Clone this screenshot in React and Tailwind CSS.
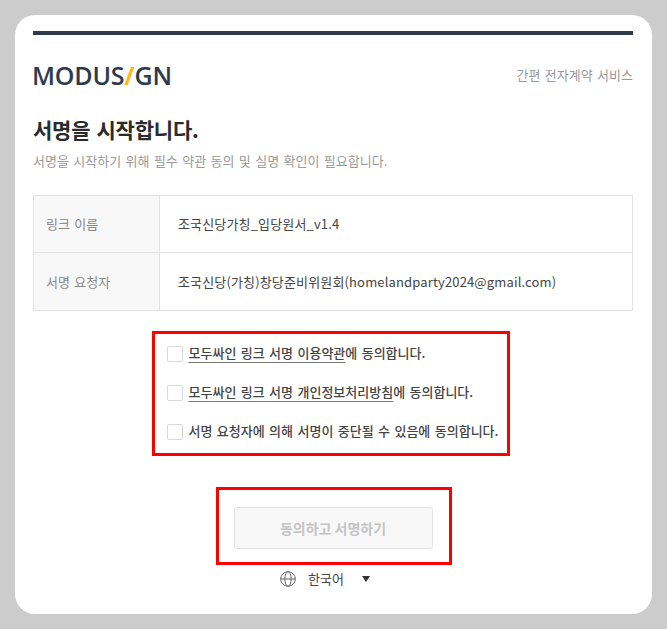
import React from 'react';

const font = 'font-["Noto_Sans_CJK_KR","Noto_Sans",sans-serif]';

const Check = ({ children }) => (
  <label className="flex items-center gap-[6px] h-[16px]">
    <span className="w-[16px] h-[16px] rounded-[2px] border border-[#d8d8d8] bg-white shrink-0" />
    <span className="text-[13px] font-medium text-[#444] whitespace-nowrap -mt-[2px]">{children}</span>
  </label>
);

const Row = ({ label, value, last }) => (
  <div className={`flex h-[57px] ${last ? '' : 'border-b border-[#e2e2e2]'}`}>
    <div className="w-[126px] shrink-0 bg-[#f8f8f8] border-r border-[#e2e2e2] flex items-center pl-[12px] text-[13px] text-[#888]">{label}</div>
    <div className="flex-1 flex items-center pl-[18px] text-[13px] text-[#444] tracking-[0.15px]">{value}</div>
  </div>
);

export default function App() {
  return (
    <div className={`w-[667px] h-[629px] bg-[#cccccc] pt-[15px] pl-[15px] overflow-hidden [word-spacing:1.5px] ${font}`}>
      <div className="w-[637px] h-[599px] bg-white rounded-[20px] pl-[18px] pr-[19px] pt-[16px]">
        <div className="h-[4px] bg-[#2f3a4d]" />

        <div className="flex items-center justify-between mt-[26px] h-[28px]">
          <div className='font-["Open_Sans",sans-serif] text-[25px] leading-none font-semibold text-[#2f3a4d] tracking-[-0.2px] -ml-[1px]'>
            MODUS<span className="text-[#fdb913] font-bold">/</span>GN
          </div>
          <div className="text-[13px] text-[#999]">간편 전자계약 서비스</div>
        </div>

        <h1 className="mt-[25px] text-[21px] leading-[30px] font-bold text-[#2b2b2b] tracking-[-0.2px]">서명을 시작합니다.</h1>
        <p className="mt-[8px] text-[13px] leading-[18px] text-[#999]">서명을 시작하기 위해 필수 약관 동의 및 실명 확인이 필요합니다.</p>

        <div className="mt-[25px] border border-[#e2e2e2]">
          <Row label="링크 이름" value="조국신당가칭_입당원서_v1.4" />
          <Row label="서명 요청자" value="조국신당(가칭)창당준비위원회(homelandparty2024@gmail.com)" last />
        </div>

        <div className="flex flex-col items-center">
          <div className="mt-[20px] mr-[5px] w-[358px] h-[125px] border-[3px] border-[#ff0000] flex flex-col gap-[23px] pl-[12px] pt-[12px]">
            <Check><span className="underline underline-offset-[4px] decoration-[#777]">모두싸인 링크 서명 이용약관</span>에 동의합니다.</Check>
            <Check><span className="underline underline-offset-[4px] decoration-[#777]">모두싸인 링크 서명 개인정보처리방침</span>에 동의합니다.</Check>
            <Check>서명 요청자에 의해 서명이 중단될 수 있음에 동의합니다.</Check>
          </div>

          <div className="mt-[31px] ml-[1px] w-[236px] h-[78px] border-[3px] border-[#ff0000] flex items-center justify-center pt-[4px]">
            <button className="w-[199px] h-[42px] -ml-[1px] rounded-[3px] border border-[#e2e2e2] bg-[#f8f8f8] text-[14px] font-bold text-[#c4c4c4]">동의하고 서명하기</button>
          </div>

          <div className="mt-[4px] mr-[16px] flex items-center h-[20px] text-[13px] text-[#444]">
            <svg width="16" height="16" viewBox="0 0 16 16" fill="none" stroke="#666" strokeWidth="1">
              <circle cx="8" cy="8" r="7.3" />
              <ellipse cx="8" cy="8" rx="3.2" ry="7.3" />
              <path d="M0.7 8h14.6" />
            </svg>
            <span className="ml-[12px]">한국어</span>
            <svg className="ml-[18px]" width="8" height="6" viewBox="0 0 8 6" fill="#333"><path d="M0 0h8L4 6z" /></svg>
          </div>
        </div>
      </div>
    </div>
  );
}
